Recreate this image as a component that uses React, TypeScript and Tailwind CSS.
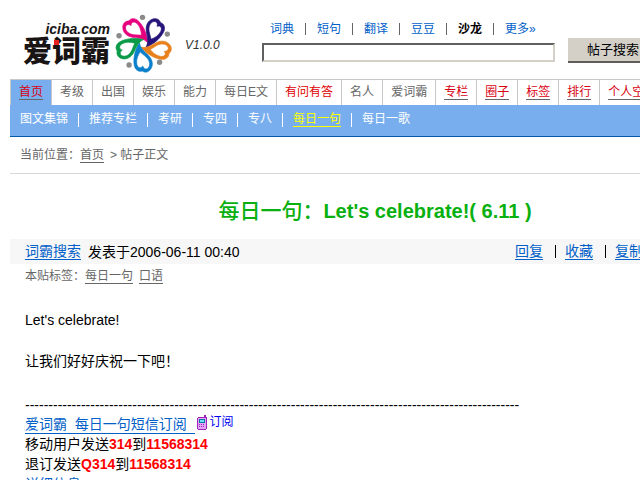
import React from "react";

const topLinks = ["词典", "短句", "翻译", "豆豆", "沙龙", "更多»"];

const tabs = [
  { label: "首页", style: "active" },
  { label: "考级", style: "plain" },
  { label: "出国", style: "plain" },
  { label: "娱乐", style: "plain" },
  { label: "能力", style: "plain" },
  { label: "每日E文", style: "plain" },
  { label: "有问有答", style: "red" },
  { label: "名人", style: "plain" },
  { label: "爱词霸", style: "plain" },
  { label: "专栏", style: "underlined" },
  { label: "圈子", style: "underlined" },
  { label: "标签", style: "underlined" },
  { label: "排行", style: "underlined" },
  { label: "个人空间", style: "underlined" },
];

const tabClasses: Record<string, string> = {
  active: "text-[#d80010] border-b border-[#666]",
  plain: "text-[#666]",
  red: "text-[#e00000]",
  underlined: "text-[#d80010] border-b border-[#666]",
};

const subLinks = ["图文集锦", "推荐专栏", "考研", "专四", "专八", "每日一句", "每日一歌"];

const petals = [
  { color: "#e6007e", angle: -36 },
  { color: "#27147a", angle: 36 },
  { color: "#e8801c", angle: 108 },
  { color: "#0a80cc", angle: 180 },
  { color: "#0a9a48", angle: 252 },
];

const Flower = () => (
  <svg viewBox="24 18 182 182" className="h-[61px] w-[61px]" aria-hidden="true">
    {petals.map((p) => (
      <path
        key={p.color}
        fill={p.color}
        stroke={p.color}
        strokeWidth="2"
        fillRule="evenodd"
        transform={`translate(115 107) rotate(${p.angle})`}
        d="M12 4C10-14-2-22-14-34C-28-48-30-64-21-76C-15-85-4-87 4-81C14-85 26-78 28-62C31-40 24-14 12 4ZM10-24C2-32-8-38-12-44C-20-54-20-66-14-72C-8-78 0-74 2-66C8-75 18-72 20-60C22-48 18-36 10-24Z"
      />
    ))}
    <g fill="#8a8a8a">
      <circle cx="112" cy="28" r="8" />
      <circle cx="186" cy="78" r="8" />
      <circle cx="163" cy="162" r="8" />
      <circle cx="72" cy="170" r="8" />
      <circle cx="42" cy="83" r="8" />
    </g>
  </svg>
);

const Phone = () => (
  <svg viewBox="0 0 10 15" className="h-[15px] w-[10px]" aria-hidden="true">
    <path fill="#a020c0" d="M7 0h2v2h1v12H9v1H1v-1H0V3h1V2h6z" />
    <path fill="#e0a8f4" d="M1 3h8v11H1z" />
    <path fill="#0878a8" d="M2 4h6v4H2z" />
    <path fill="#70e0f8" d="M3 5h4v2H3z" />
    <path fill="#a020c0" d="M2 9h1v1H2zM4 9h1v1H4zM6 9h1v1H6zM2 11h1v1H2zM4 11h1v1H4zM6 11h1v1H6z" />
  </svg>
);

const Header = () => (
  <header className="flex h-[79px] items-start">
    <a href="#" className="flex shrink-0 pl-[13px] pt-[14px] text-[#181414]">
      <span className="flex flex-col items-end pt-[8px]">
        <span className="text-[14px] font-bold italic leading-[14px]">iciba.com</span>
        <span className="relative text-[29px] font-black leading-[33px]">
          爱词霸
          <span className="absolute left-[31px] top-[4px] h-[5px] w-[5px] bg-[#e82020]" />
        </span>
      </span>
      <span className="ml-[3px]">
        <Flower />
      </span>
    </a>
    <span className="w-[88px] shrink-0 pl-[11px] pt-[37px] text-[12px] italic leading-[16px] text-[#333]">
      V1.0.0
    </span>
    <div className="flex grow items-start pt-[21px]">
      <div className="shrink-0">
        <nav className="flex h-[16px] items-center pl-2 text-[12px] text-[#0060c8]">
          {topLinks.map((label, i) => (
            <React.Fragment key={label}>
              {i > 0 && <span className="mx-[11px] h-[12px] w-px bg-[#666]" />}
              <a href="#" className={label === "沙龙" ? "font-bold text-black" : ""}>
                {label}
              </a>
            </React.Fragment>
          ))}
        </nav>
        <input
          type="text"
          aria-label="帖子搜索"
          className="mt-[6px] block h-[19px] w-[293px] border-2 border-b-[#d4d0c8] border-l-[#606060] border-r-[#d4d0c8] border-t-[#606060] bg-white px-1 text-[12px]"
        />
      </div>
      <button className="ml-[13px] mt-[17px] h-[25px] shrink-0 border-b-2 border-r-2 border-[#605c58] bg-[#d4d0c8] px-[19px] text-[13px]">
        帖子搜索
      </button>
    </div>
  </header>
);

const Navigation = () => (
  <nav className="text-[12px]">
    <ul className="flex h-[26px] border-l border-t border-[#c8c8c8]">
      {tabs.map((tab) => (
        <li
          key={tab.label}
          className={`flex shrink-0 items-start border-r border-[#c8c8c8] px-2 pt-[5px] ${
            tab.style === "active" ? "bg-[#78aeee]" : ""
          }`}
        >
          <a href="#" className={`leading-[14px] ${tabClasses[tab.style]}`}>
            {tab.label}
          </a>
        </li>
      ))}
    </ul>
    <div className="flex h-[32px] items-center border-b border-[#0058a8] bg-[#78aeee] pb-[2px] pl-[10px] text-white">
      {subLinks.map((label, i) => (
        <React.Fragment key={label}>
          {i > 0 && <span className="mx-[10px] h-[14px] w-px bg-white" />}
          <a
            href="#"
            className={
              label === "每日一句"
                ? "border-b border-[#ffff00] leading-[14px] text-[#ffff00]"
                : "border-b border-transparent leading-[14px]"
            }
          >
            {label}
          </a>
        </React.Fragment>
      ))}
    </div>
  </nav>
);

const Post = () => (
  <article>
    <h1 className="pt-[23px] text-center text-[20px] font-bold leading-[28px] text-[#08b010]">
      <span className="text-[21px] font-medium">每日一句：</span>Let's celebrate!( 6.11 )
    </h1>
    <div className="mt-[14px] flex h-[25px] items-center bg-[#f7f7f7] pl-[15px] pr-[97px] text-[14px] leading-[16px]">
      <a href="#" className="border-b border-[#0060c8] text-[#0060c8]">
        词霸搜索
      </a>
      <span className="ml-[7px]">发表于2006-06-11 00:40</span>
      <div className="ml-auto flex items-center">
        {["回复", "收藏", "复制"].map((label, i) => (
          <React.Fragment key={label}>
            {i > 0 && <span className="ml-[12px] mr-[9px] h-[13px] w-px bg-black" />}
            <a href="#" className="border-b border-[#0060c8] text-[#0060c8]">
              {label}
            </a>
          </React.Fragment>
        ))}
      </div>
    </div>
    <div className="flex h-[24px] items-center pl-[15px] text-[12px] leading-[14px] text-[#666]">
      <span>本贴标签：</span>
      <a href="#" className="border-b border-[#666]">
        每日一句
      </a>
      <a href="#" className="ml-[6px] border-b border-[#666]">
        口语
      </a>
    </div>
    <div className="pl-[15px] pt-[22px] text-[14px] leading-[20px]">
      <p>Let's celebrate!</p>
      <p className="mt-[21px]">让我们好好庆祝一下吧！</p>
      <p className="mt-6">{"-".repeat(106)}</p>
      <div className="flex items-start">
        <a href="#" className="border-b border-[#0060c8] leading-[18px] whitespace-pre text-[#0060c8]">
          {"爱词霸  每日一句短信订阅  "}
        </a>
        <a href="#" className="ml-[2px] flex items-start gap-[3px] text-[12px] leading-[15px] text-[#0000f0]">
          <Phone />
          订阅
        </a>
      </div>
      <p>
        移动用户发送<b className="text-[#ff0000]">314</b>到
        <b className="text-[#ff0000]">11568314</b>
      </p>
      <p>
        退订发送<b className="text-[#ff0000]">Q314</b>到
        <b className="text-[#ff0000]">11568314</b>
      </p>
      <a href="#" className="text-[#0060c8] underline">
        详细信息
      </a>
    </div>
  </article>
);

const App = () => {
  return (
    <div className="h-screen overflow-hidden bg-white pl-[10px] font-['Liberation_Sans','Noto_Sans_CJK_SC',sans-serif] text-black">
      <div className="min-w-[730px]">
        <Header />
        <Navigation />
        {/* BREADCRUMB */}
        <div className="flex h-[37px] items-center border-b border-[#d8d8d8] pl-[10px] text-[12px] leading-[14px] text-[#666]">
          <span>当前位置：</span>
          <a href="#" className="border-b border-[#666]">
            首页
          </a>
          <span className="ml-[6px]">&gt; 帖子正文</span>
        </div>
        <Post />
      </div>
    </div>
  );
};

export default App;
